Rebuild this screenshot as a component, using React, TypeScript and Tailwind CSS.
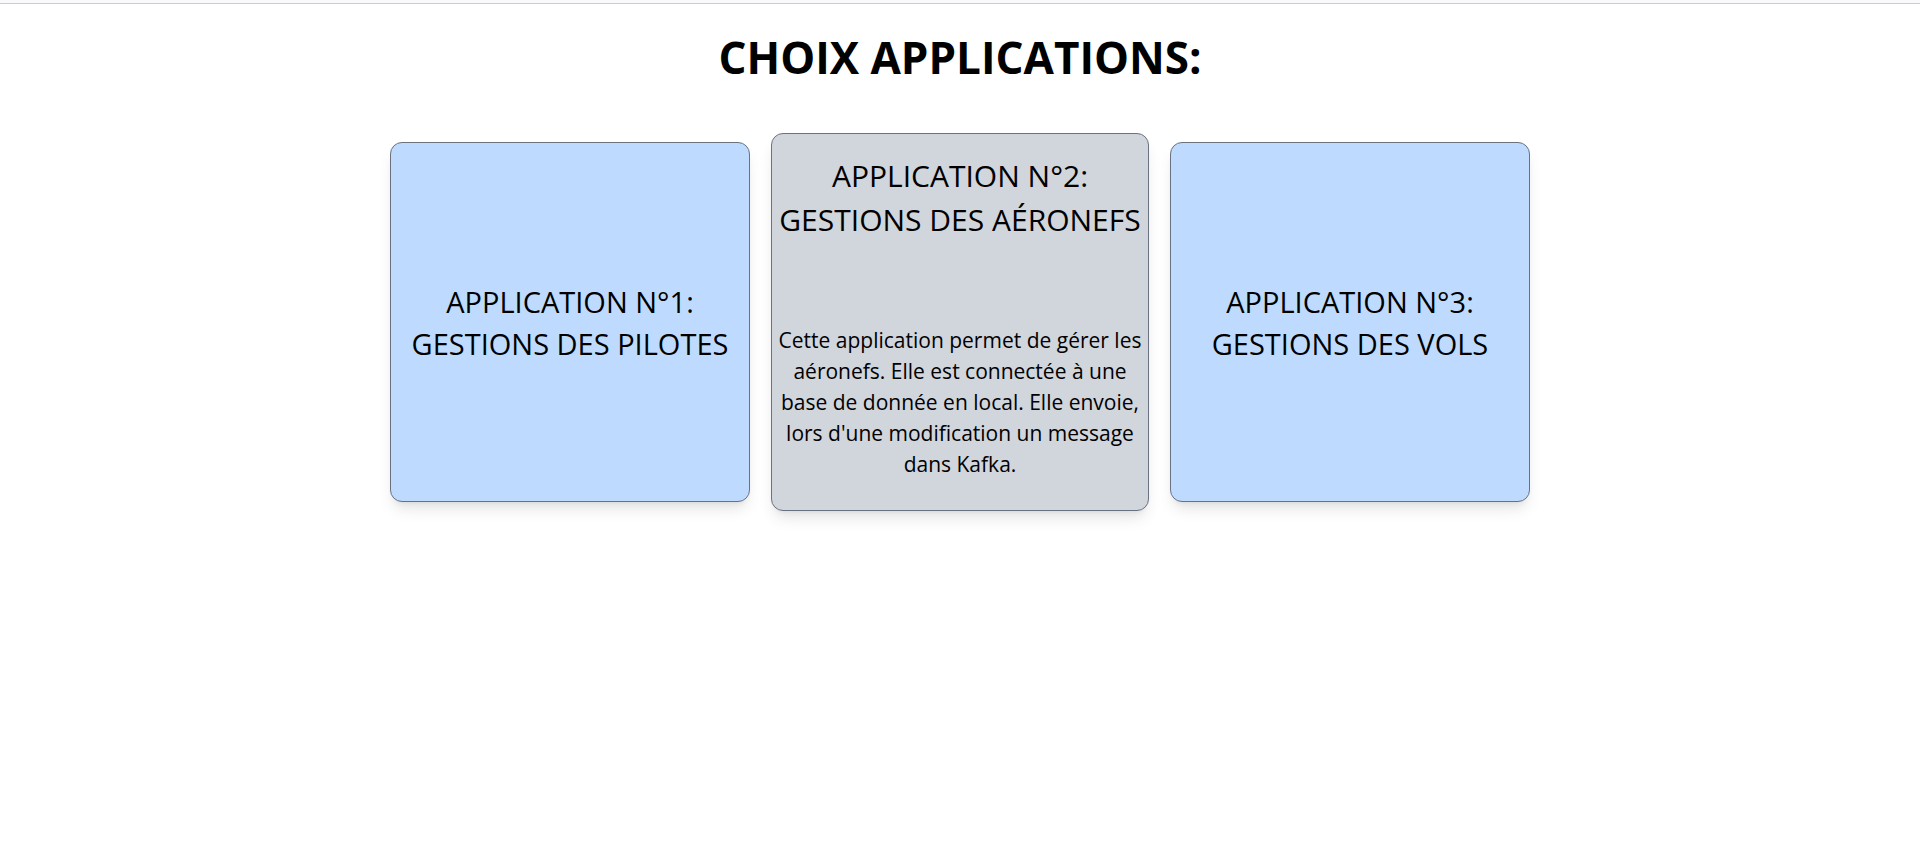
type Application = {
  numero: number;
  nom: string;
  description?: string;
};

const applications: Application[] = [
  { numero: 1, nom: "GESTIONS DES PILOTES" },
  {
    numero: 2,
    nom: "GESTIONS DES AÉRONEFS",
    description:
      "Cette application permet de gérer les aéronefs. Elle est connectée à une base de donnée en local. Elle envoie, lors d'une modification un message dans Kafka.",
  },
  { numero: 3, nom: "GESTIONS DES VOLS" },
];

function Carte({ numero, nom, description }: Application) {
  if (description) {
    return (
      <a
        href={`#application-${numero}`}
        className="flex h-[378px] w-[378px] flex-col items-center rounded-xl border border-gray-500 bg-gray-300 pt-5 text-center shadow-lg"
      >
        <h2 className="text-[30px] leading-[44px] whitespace-nowrap">
          APPLICATION N°{numero}:
          <br />
          {nom}
        </h2>
        <p className="mt-auto px-1 pb-[30px] text-[21px] leading-[31px]">{description}</p>
      </a>
    );
  }
  return (
    <a
      href={`#application-${numero}`}
      className="flex h-[360px] w-[360px] items-center justify-center rounded-xl border border-gray-500 bg-blue-200 pt-0.5 text-center shadow-lg"
    >
      <h2 className="text-[29px] leading-[42px] whitespace-nowrap">
        APPLICATION N°{numero}:
        <br />
        {nom}
      </h2>
    </a>
  );
}

export default function App() {
  return (
    <div className="min-h-screen bg-white font-['Open_Sans','Noto_Sans',sans-serif] text-black">
      <div className="h-1 border-b border-[#cccccc] bg-[#f9f9fb]" />
      <main className="flex flex-col items-center pt-6">
        <h1 className="text-center text-[44px] leading-[59px] font-bold">CHOIX APPLICATIONS:</h1>
        <div className="mt-[46px] flex flex-wrap items-center justify-center gap-[21px]">
          {applications.map((application) => (
            <Carte key={application.numero} {...application} />
          ))}
        </div>
      </main>
    </div>
  );
}
